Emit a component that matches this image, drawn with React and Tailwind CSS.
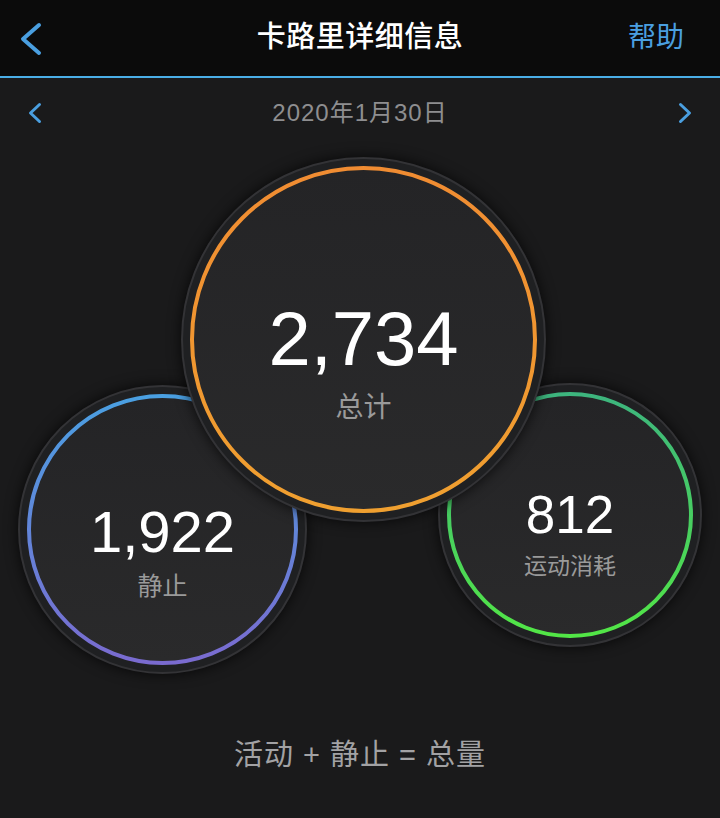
import React from 'react';

const FONT = { fontFamily: '"Liberation Sans", "Noto Sans CJK SC", sans-serif' };

const Chevron = ({ dir = 'left', className, w = 22, h = 34, stroke = 4 }) => {
  const pad = stroke / 2 + 1;
  const pts =
    dir === 'left'
      ? `${w - pad},${pad} ${pad},${h / 2} ${w - pad},${h - pad}`
      : `${pad},${pad} ${w - pad},${h / 2} ${pad},${h - pad}`;
  return (
    <svg width={w} height={h} viewBox={`0 0 ${w} ${h}`} className={className}>
      <polyline
        points={pts}
        fill="none"
        stroke="currentColor"
        strokeWidth={stroke}
        strokeLinecap="round"
        strokeLinejoin="round"
      />
    </svg>
  );
};

// one ring: dark disc, coloured stroke, value and label
const Ring = ({ id, size, from, to, value, label, valueClass, labelClass, labelPad, className }) => {
  const r = size / 2 - 11;
  return (
    <div
      className={`absolute rounded-full bg-[#1f2022] border-2 border-[#333336] shadow-[0_0_14px_rgba(0,0,0,0.75)] ${className}`}
      style={{ width: size, height: size }}
    >
      <svg className="absolute -inset-[2px]" width={size} height={size} viewBox={`0 0 ${size} ${size}`}>
        <defs>
          <linearGradient id={id} x1="0" y1="0" x2="0" y2="1">
            <stop offset="0%" stopColor={from} />
            <stop offset="100%" stopColor={to} />
          </linearGradient>
          <linearGradient id={`${id}-fill`} x1="0" y1="0" x2="0" y2="1">
            <stop offset="0%" stopColor="#242426" />
            <stop offset="100%" stopColor="#2a2a2b" />
          </linearGradient>
        </defs>
        <circle cx={size / 2} cy={size / 2} r={r} fill={`url(#${id}-fill)`} stroke={`url(#${id})`} strokeWidth="4" />
      </svg>
      <div className="absolute -inset-[2px] flex flex-col items-center justify-center" style={{ paddingTop: labelPad }}>
        <div className={`text-white leading-none ${valueClass}`}>{value}</div>
        <div className={`text-[#9a9a9a] leading-none ${labelClass}`}>{label}</div>
      </div>
    </div>
  );
};

export default function App() {
  return (
    <div className="w-[720px] h-[818px] bg-[#1a1a1b] overflow-hidden" style={FONT}>
      {/* header */}
      <div className="h-[78px] bg-[#0b0b0b] border-b-2 border-[#4aaee6] flex items-center justify-between px-[20px] relative">
        <Chevron dir="left" className="text-[#4a9fe0] mt-[2px]" />
        <div className="absolute left-0 right-0 text-center text-white text-[29px] font-medium tracking-[0.5px]">
          卡路里详细信息
        </div>
        <div className="text-[#4a9fe0] text-[28px] mr-[16px]">帮助</div>
      </div>

      {/* date */}
      <div className="h-[70px] flex items-center justify-between px-[28px]">
        <Chevron dir="left" w={14} h={22} stroke={3} className="text-[#4a9fe0]" />
        <div className="text-[#8e8e90] text-[24px] tracking-[1px]">2020年1月30日</div>
        <Chevron dir="right" w={14} h={22} stroke={3} className="text-[#4a9fe0]" />
      </div>

      {/* rings */}
      <div className="relative h-[587px]">
        <Ring
          id="rest"
          size={289}
          from="#4aa0e2"
          to="#7a6bd0"
          value="1,922"
          label="静止"
          valueClass="text-[58px]"
          labelClass="text-[25px] mt-[13px]"
          labelPad={42}
          className="left-[18px] top-[237px]"
        />
        <Ring
          id="active"
          size={264}
          from="#3db57e"
          to="#52e646"
          value="812"
          label="运动消耗"
          valueClass="text-[53px]"
          labelClass="text-[23px] mt-[14px]"
          labelPad={36}
          className="left-[438px] top-[235px]"
        />
        <Ring
          id="total"
          size={365}
          from="#f08c32"
          to="#f0a030"
          value="2,734"
          label="总计"
          valueClass="text-[76px]"
          labelClass="text-[28px] mt-[17px]"
          labelPad={43}
          className="left-[181px] top-[9px]"
        />
      </div>

      <div className="text-center text-[#a2a2a4] text-[29px] leading-[40px] tracking-[1px]">活动 + 静止 = 总量</div>
    </div>
  );
}
